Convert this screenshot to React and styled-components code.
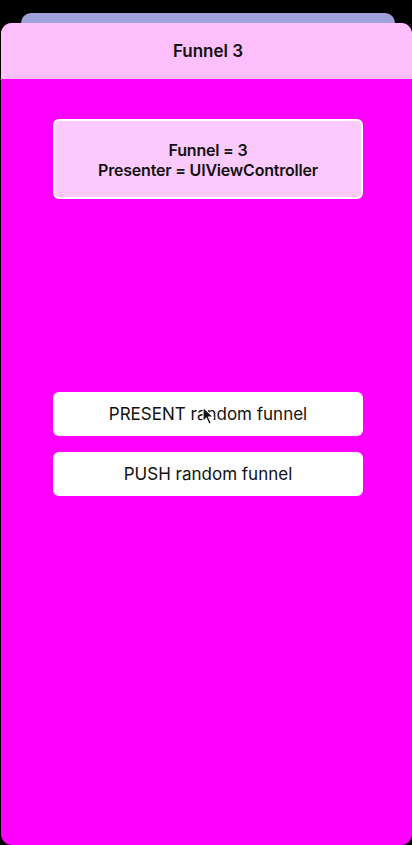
import React from "react";
import styled, { createGlobalStyle } from "styled-components";

const Global = createGlobalStyle`
  html, body {
    margin: 0;
    padding: 0;
    background: #000;
    height: 845px;
    overflow: hidden;
  }
  body {
    font-family: Inter, "Liberation Sans", sans-serif;
    -webkit-font-smoothing: antialiased;
  }
`;

const Screen = styled.div`
  display: flex;
  flex-direction: column;
  height: 845px;
  padding-top: 13px;
  box-sizing: border-box;
`;

const BackSheet = styled.div`
  height: 10px;
  margin: 0 17px 0 21px;
  background: #a0a0dd;
  border-radius: 10px 10px 0 0;
`;

const Sheet = styled.div`
  flex: 1;
  margin-left: 1px;
  display: flex;
  flex-direction: column;
  background: #ff00ff;
  border-radius: 11px;
  overflow: hidden;
`;

const NavBar = styled.header`
  height: 56px;
  flex-shrink: 0;
  display: flex;
  align-items: center;
  justify-content: center;
  background: #fdc0fd;
  font-size: 17px;
  font-weight: 600;
  color: #111;
  padding-left: 3px;
`;

const Content = styled.div`
  display: flex;
  flex-direction: column;
  padding: 40px 0 0 52px;
`;

const InfoBox = styled.div`
  width: 310px;
  height: 80px;
  box-sizing: border-box;
  display: flex;
  flex-direction: column;
  align-items: center;
  justify-content: center;
  background: #fdcafd;
  border: 2px solid #fff;
  border-radius: 6px;
  font-size: 16px;
  font-weight: 600;
  letter-spacing: -0.2px;
  line-height: 20px;
  color: #111;
  padding-top: 2px;
`;

const Actions = styled.div`
  display: flex;
  flex-direction: column;
  gap: 16px;
  margin-top: 193px;
`;

const ActionButton = styled.button`
  position: relative;
  width: 310px;
  height: 44px;
  border: none;
  border-radius: 6px;
  background: #fff;
  font-family: inherit;
  font-size: 17px;
  font-weight: 400;
  color: #111;
  cursor: pointer;
`;

const Cursor = styled.svg`
  position: absolute;
  left: 149px;
  top: 14px;
  width: 13px;
  height: 20px;
`;

export default function App() {
  return (
    <>
      <Global />
      <Screen>
        <BackSheet />
        <Sheet>
          <NavBar>Funnel 3</NavBar>
          <Content>
            <InfoBox>
              <div>Funnel = 3</div>
              <div>Presenter = UIViewController</div>
            </InfoBox>
            <Actions>
              <ActionButton>
                PRESENT random funnel
                <Cursor viewBox="0 0 12 18">
                  <path d="M1 1 L1 14 L4 11 L6.5 16.5 L8.5 15.5 L6 10 L10.5 10 Z" fill="#111" stroke="#fff" strokeWidth="1" />
                </Cursor>
              </ActionButton>
              <ActionButton>PUSH random funnel</ActionButton>
            </Actions>
          </Content>
        </Sheet>
      </Screen>
    </>
  );
}
